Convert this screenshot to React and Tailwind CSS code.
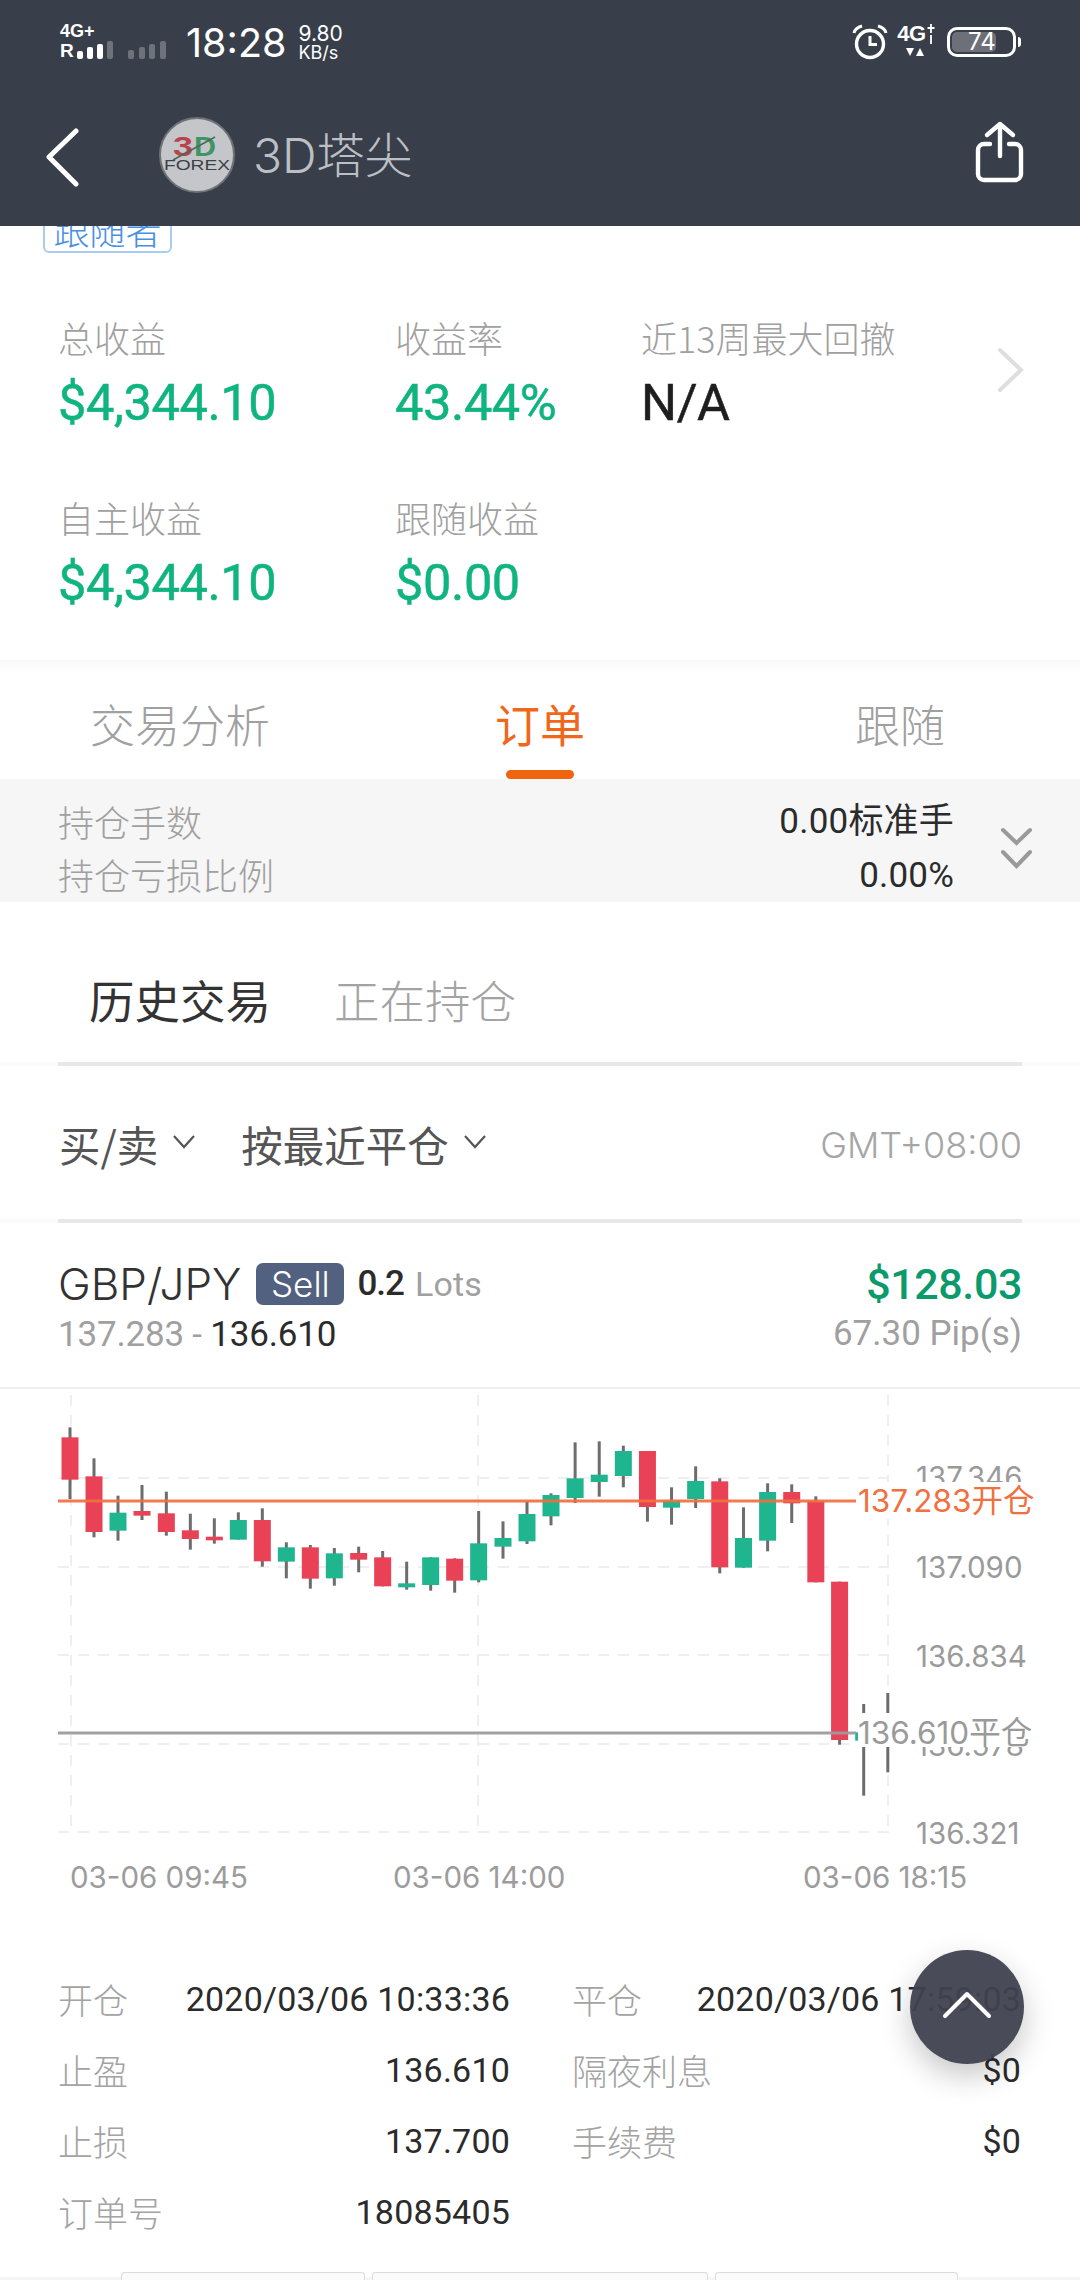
import React from 'react';

const cjk = '"Noto Sans CJK SC", "Noto Sans", sans-serif';
const num = 'Roboto, "Noto Sans CJK SC", sans-serif';

const C = (X, wt, wb, bt, bb, up) => ({ x: 40 + X / 3, wt: 1380 + wt / 3, wb: 1380 + wb / 3, bt: 1380 + bt / 3, bb: 1380 + bb / 3, up });
const D = (X, wt, wb, bt, bb, up) => ({ x: 540 + X / 2.904, wt: 1380 + wt / 3, wb: 1380 + wb / 3, bt: 1380 + bt / 3, bb: 1380 + bb / 3, up });

const candles = [
  C(90, 145, 360, 175, 302, 0), C(162, 238, 475, 292, 459, 0), C(234, 350, 485, 401, 455, 1),
  C(306, 318, 423, 396, 410, 0), C(379, 338, 470, 403, 459, 0), C(451, 404, 512, 454, 480, 0),
  C(523, 418, 494, 473, 484, 0), C(595, 400, 482, 423, 482, 1), C(667, 388, 563, 423, 547, 0),
  C(739, 490, 598, 505, 548, 1), C(811, 498, 629, 505, 599, 0), C(883, 507, 620, 523, 598, 1),
  C(956, 503, 580, 522, 542, 0), C(1028, 516, 622, 535, 622, 0), C(1100, 548, 632, 613, 625, 1),
  C(1172, 535, 635, 535, 618, 1), C(1244, 538, 641, 539, 605, 0), C(1316, 396, 610, 493, 604, 1),
  C(1389, 427, 539, 477, 503, 1), C(1461, 368, 495, 405, 487, 1), C(1533, 343, 439, 348, 412, 1),
  D(102, 190, 372, 298, 357, 1), D(172, 187, 353, 287, 309, 1), D(242, 200, 325, 216, 291, 1),
  D(312, 216, 428, 216, 384, 0), D(382, 325, 437, 365, 386, 1), D(452, 262, 387, 306, 360, 1),
  D(522, 298, 583, 307, 565, 0), D(591, 385, 566, 477, 566, 1), D(661, 313, 517, 339, 485, 1),
  D(731, 316, 432, 339, 373, 0), D(801, 352, 610, 367, 610, 0), D(870, 608, 1097, 608, 1083, 0),
  D(940, 975, 1250, 1060, 1085, 1), D(1010, 942, 1180, 1060, 1080, 1),
];

function Chart() {
  const hs = [1479, 1568, 1656, 1745, 1833];
  const vs = [71, 478, 888];
  return (
    <svg className="block" width="1080" height="460" viewBox="0 1390 1080 460">
      {hs.map((y) => (
        <line key={y} x1="58" x2="898" y1={y} y2={y} stroke="#efefef" strokeWidth="2" strokeDasharray="11 9" />
      ))}
      {vs.map((x) => (
        <line key={x} x1={x} x2={x} y1="1396" y2="1833" stroke="#efefef" strokeWidth="2" strokeDasharray="11 9" />
      ))}
      {candles.map((c, i) => (
        <g key={i}>
          <rect x={c.x - 1.5} y={c.wt} width="3" height={c.wb - c.wt} fill="#6d6d6d" />
          <rect x={c.x - 8.5} y={c.bt} width="17" height={c.bb - c.bt} fill={c.up ? '#1fb58f' : '#e94257'} />
        </g>
      ))}
      <rect x="58" y="1500.5" width="798" height="3" fill="#f0703f" fillOpacity="0.92" />
      <rect x="58" y="1732.5" width="798" height="3" fill="#9c9c9c" fillOpacity="0.95" />
    </svg>
  );
}

function Row({ a, b, c, d }) {
  return (
    <div className="flex h-[71px] items-center pl-[58px] pr-[59px]">
      <div className="flex w-[452px] items-center justify-between">
        <span className="text-[35px] text-[#a3a3a3] font-light" style={{ fontFamily: cjk }}>{a}</span>
        <span className="text-[34px] text-[#2b2b2b] tracking-[0.2px]" style={{ fontFamily: num }}>{b}</span>
      </div>
      {c ? (
        <div className="ml-[62px] flex w-[449px] items-center justify-between">
          <span className="text-[35px] text-[#a3a3a3] font-light" style={{ fontFamily: cjk }}>{c}</span>
          <span className="text-[34px] text-[#2b2b2b] tracking-[0.2px]" style={{ fontFamily: num }}>{d}</span>
        </div>
      ) : null}
    </div>
  );
}

function Stat({ label, value, dark }) {
  return (
    <div className="flex flex-col">
      <span className="h-[50px] text-[36px] leading-[50px] font-light text-[#a0a0a0] whitespace-nowrap" style={{ fontFamily: cjk }}>{label}</span>
      <span
        className={`mt-[16px] h-[50px] text-[50.5px] leading-[50px] font-normal tracking-[-0.4px] whitespace-nowrap ${dark ? 'text-[#1e1e1e]' : 'text-[#0fb47f]'}`}
        style={{ fontFamily: num, WebkitTextStroke: '0.5px currentColor' }}
      >
        {value}
      </span>
    </div>
  );
}

function Caret() {
  return (
    <svg width="24" height="16" viewBox="0 0 24 16" fill="none" stroke="#555" strokeWidth="2.2">
      <path d="M2 2l10 11L22 2" />
    </svg>
  );
}

export default function App() {
  return (
    <div className="relative h-[2280px] w-[1080px] overflow-hidden bg-white" style={{ fontFamily: cjk }}>
      {/* header */}
      <header className="h-[226px] bg-[#383f4a]">
        <div className="flex h-[84px] items-start justify-between pl-[60px] pr-[64px] pt-[21px]">
          <div className="flex items-start">
            <div className="flex w-[117px] flex-col text-white" style={{ fontFamily: '"Liberation Sans", sans-serif' }}>
              <span className="h-[20px] text-[18px] leading-[20px] font-bold">4G+</span>
              <div className="flex h-[20px] items-center">
                <span className="text-[19px] leading-[20px] font-bold">R</span>
                <svg width="102" height="20" viewBox="0 0 102 20" className="ml-[1px]">
                  <rect x="2" y="10" width="6" height="8" rx="2" fill="#fff" />
                  <rect x="12" y="6" width="6" height="12" rx="2" fill="#fff" />
                  <rect x="22" y="3" width="6" height="15" rx="2" fill="#fff" />
                  <rect x="32" y="0" width="6" height="18" rx="2" fill="#6d727b" />
                  <rect x="53" y="9" width="6" height="9" rx="2" fill="#6d727b" />
                  <rect x="64" y="6" width="6" height="12" rx="2" fill="#6d727b" />
                  <rect x="74" y="3" width="6" height="15" rx="2" fill="#6d727b" />
                  <rect x="85" y="0" width="6" height="18" rx="2" fill="#6d727b" />
                </svg>
              </div>
            </div>
            <span className="ml-[9px] text-[39.5px] leading-[44px] text-white" style={{ fontFamily: 'Inter, sans-serif' }}>18:28</span>
            <div className="ml-[12px] flex flex-col text-white" style={{ fontFamily: 'Inter, sans-serif' }}>
              <span className="text-[21px] leading-[21px] mt-[2px]">9.80</span>
              <span className="text-[18px] leading-[18px]">KB/s</span>
            </div>
          </div>
          <div className="flex items-start">
            <svg width="36" height="36" viewBox="0 0 36 36" fill="none" stroke="#fff" className="mt-[3px]">
              <circle cx="18" cy="20" r="13.5" strokeWidth="3.4" />
              <path d="M18 12v8.5h7" strokeWidth="3" />
              <path d="M2 9c1-4 4-6 8-7M34 9c-1-4-4-6-8-7" strokeWidth="3" />
            </svg>
            <div className="ml-[9px] flex w-[38px] flex-col items-center text-white" style={{ fontFamily: '"Liberation Sans", sans-serif' }}>
              <div className="flex h-[26px] items-center">
                <span className="text-[22px] leading-[26px] font-bold whitespace-nowrap tracking-[-0.5px]">4G</span>
                <svg width="8" height="20" viewBox="0 0 8 20" fill="none" stroke="#fff" strokeWidth="1.8" className="ml-[1px]">
                  <path d="M4 0v9M0.5 4h7M4 11v9" />
                </svg>
              </div>
              <svg width="20" height="8" viewBox="0 0 20 8" fill="#fff" className="mt-[1px]">
                <path d="M0 0h8L4 8zM10 8h8L14 0z" />
              </svg>
            </div>
            <div className="relative ml-[12px] mt-[6px] flex h-[30px] w-[69px] items-center rounded-[10px] border-[3px] border-white p-[2px]">
              <div className="h-full w-[44px] rounded-[5px] bg-[#6d6f79]" />
              <span className="absolute left-[18px] top-[-3px] text-[24px] leading-[30px] text-white" style={{ fontFamily: 'Inter, sans-serif' }}>74</span>
              <div className="absolute right-[-8px] top-[7px] h-[10px] w-[3px] rounded-r bg-white" />
            </div>
          </div>
        </div>
        <div className="flex h-[142px] items-start pl-[45px] pr-[55px]">
          <svg width="36" height="60" viewBox="0 0 36 60" fill="none" stroke="#fff" strokeWidth="5" strokeLinecap="round" strokeLinejoin="round" className="mt-[44px]">
            <path d="M31 3L4 29l27 27" />
          </svg>
          <svg width="76" height="76" viewBox="0 0 76 76" className="ml-[78px] mt-[33px]">
            <circle cx="38" cy="38" r="37" fill="#c5c6ca" stroke="#6f7278" strokeWidth="2" />
            <text x="14" y="39" fontSize="27" fontWeight="700" fill="#b8434e" fontFamily="Liberation Sans" textLength="20" lengthAdjust="spacingAndGlyphs">3</text>
            <text x="35" y="39" fontSize="27" fontWeight="700" fill="#3f9468" fontFamily="Liberation Sans" textLength="22" lengthAdjust="spacingAndGlyphs">D</text>
            <path d="M14 43L56 20" stroke="#4d6a55" strokeWidth="1.6" />
            <text x="38" y="53" textAnchor="middle" fontSize="15" fill="#3d4047" fontFamily="Liberation Sans" textLength="66" lengthAdjust="spacingAndGlyphs">FOREX</text>
          </svg>
          <span className="ml-[18px] mt-[42px] text-[48px] leading-[60px] font-light text-[#bcbfc4] whitespace-nowrap" style={{ fontFamily: 'Inter, "Noto Sans CJK SC", sans-serif' }}>3D塔尖</span>
          <svg width="50" height="62" viewBox="0 0 50 62" fill="none" stroke="#fff" strokeWidth="4.4" strokeLinecap="round" strokeLinejoin="round" className="ml-auto mt-[37px]">
            <path d="M15 23H9a6 6 0 0 0-6 6v24a6 6 0 0 0 6 6h31a6 6 0 0 0 6-6V29a6 6 0 0 0-6-6h-6" />
            <path d="M25 35V3M12 14L25 3l13 11" />
          </svg>
        </div>
      </header>

      {/* badge + stats */}
      <section className="h-[434px] pl-[58px]">
        <div className="-ml-[15px] h-[28px] overflow-hidden">
          <div className="-mt-[20px] flex h-[47px] w-[129px] items-center justify-center rounded-[6px] border-2 border-[#a9cdf0] text-[36px] leading-[47px] font-light text-[#4a90e2]">跟随者</div>
        </div>
        <div className="mt-[58px] flex items-center pr-[55px]">
          <div className="w-[337px]"><Stat label="总收益" value="$4,344.10" /></div>
          <div className="w-[246px]"><Stat label="收益率" value="43.44%" /></div>
          <div className="flex-1"><Stat label="近13周最大回撤" value="N/A" dark /></div>
          <svg width="28" height="46" viewBox="0 0 28 46" fill="none" stroke="#dedede" strokeWidth="4" strokeLinecap="round">
            <path d="M3 3l21 20L3 43" />
          </svg>
        </div>
        <div className="mt-[64px] flex">
          <div className="w-[337px]"><Stat label="自主收益" value="$4,344.10" /></div>
          <div className="w-[246px]"><Stat label="跟随收益" value="$0.00" /></div>
        </div>
      </section>
      <div className="h-[12px] bg-gradient-to-b from-[#f8f8f8] to-white" />

      {/* main tabs */}
      <nav className="grid h-[107px] grid-cols-3 text-[45px] font-light text-[#a0a0a0]">
        <div className="flex flex-col items-center pt-[22px]"><span className="leading-[60px]">交易分析</span></div>
        <div className="flex flex-col items-center pt-[22px] text-[#f0671a]">
          <span className="leading-[60px] font-normal">订单</span>
          <span className="mt-[16px] h-[9px] w-[68px] rounded-full bg-[#f0640f]" />
        </div>
        <div className="flex flex-col items-center pt-[22px]"><span className="leading-[60px]">跟随</span></div>
      </nav>

      {/* position summary */}
      <section className="flex h-[123px] items-center bg-[#f6f6f6] pl-[58px] pr-[47px] pt-[14px]">
        <div className="flex flex-1 flex-col text-[36px] leading-[52px]">
          <div className="flex justify-between">
            <span className="font-light text-[#a0a0a0]">持仓手数</span>
            <span className="text-[35px] text-[#2b2b2b] tracking-[0.2px] mt-[1px]" style={{ fontFamily: num }}>0.00标准手</span>
          </div>
          <div className="flex justify-between">
            <span className="font-light text-[#a0a0a0]">持仓亏损比例</span>
            <span className="text-[35px] text-[#2b2b2b] tracking-[0.2px] mt-[2px] -mb-[2px]" style={{ fontFamily: num }}>0.00%</span>
          </div>
        </div>
        <svg width="33" height="42" viewBox="0 0 33 42" fill="none" stroke="#9a9a9a" strokeWidth="4" strokeLinecap="round" className="ml-[46px]">
          <path d="M3 3l13.5 13L30 3M3 25l13.5 14L30 25" />
        </svg>
      </section>

      {/* sub tabs */}
      <div className="flex h-[160px] items-center pl-[89px] pt-[34px] text-[45.5px]">
        <span className="font-normal text-[#333]">历史交易</span>
        <span className="ml-[63px] font-light text-[#a3a3a3]">正在持仓</span>
      </div>
      <div className="flex h-[4px] bg-[#fafafa]"><div className="ml-[58px] w-[964px] bg-[#e8e8e8]" /></div>

      {/* filter row */}
      <div className="flex h-[153px] items-center pl-[59px] pr-[58px] pt-[4px]">
        <span className="text-[41.5px] text-[#555]">买/卖</span>
        <span className="ml-[14px] mb-[6px]"><Caret /></span>
        <span className="ml-[45px] text-[41.5px] text-[#555]">按最近平仓</span>
        <span className="ml-[14px] mb-[6px]"><Caret /></span>
        <span className="ml-auto text-[36px] font-light text-[#a6a6a6]" style={{ fontFamily: 'Inter, sans-serif' }}>GMT+08:00</span>
      </div>
      <div className="flex h-[4px] bg-[#fafafa]"><div className="ml-[58px] w-[964px] bg-[#e8e8e8]" /></div>

      {/* order title */}
      <div className="flex h-[166px] justify-between pl-[58px] pr-[58px] pt-[38px] border-b-2 border-[#f0f0f0]">
        <div className="flex flex-col">
          <div className="flex h-[46px] items-center">
            <span className="text-[44px] font-light text-[#333]" style={{ fontFamily: 'Inter, sans-serif' }}>GBP/JPY</span>
            <span className="ml-[15px] flex h-[42px] w-[88px] items-center justify-center rounded-[7px] bg-[#51617f] text-[35px] font-light text-white" style={{ fontFamily: 'Inter, sans-serif' }}>Sell</span>
            <span className="ml-[13px] text-[35px] font-medium tracking-[-1px] text-[#2b2b2b]" style={{ fontFamily: num }}>0.2</span>
            <span className="ml-[11px] text-[34px] tracking-[0.2px] text-[#a0a0a0]" style={{ fontFamily: num }}>Lots</span>
          </div>
          <div className="mt-[6px] text-[35px] leading-[44px] tracking-[-0.2px]" style={{ fontFamily: num }}>
            <span className="text-[#a0a0a0]">137.283 - </span><span className="text-[#2b2b2b]">136.610</span>
          </div>
        </div>
        <div className="flex flex-col items-end">
          <span className="h-[46px] text-[43px] leading-[46px] font-medium tracking-[-0.4px] text-[#0a9a6b]" style={{ fontFamily: num }}>$128.03</span>
          <span className="mt-[5px] text-[35px] leading-[44px] text-[#a0a0a0]" style={{ fontFamily: num }}>67.30 Pip(s)</span>
        </div>
      </div>

      {/* chart */}
      <div className="relative h-[460px]">
        <Chart />
        <span className="absolute left-[916px] top-[70px] h-[36px] text-[29.5px] leading-[36px] text-[#9a9a9a]" style={{ fontFamily: 'Inter, sans-serif' }}>137.346</span>
        <span className="absolute left-[916px] top-[160px] text-[29.5px] leading-[36px] text-[#9a9a9a]" style={{ fontFamily: 'Inter, sans-serif' }}>137.090</span>
        <span className="absolute left-[916px] top-[249px] text-[29.5px] leading-[36px] text-[#9a9a9a]" style={{ fontFamily: 'Inter, sans-serif' }}>136.834</span>
        <span className="absolute left-[916px] top-[338px] text-[29.5px] leading-[36px] text-[#9a9a9a]" style={{ fontFamily: 'Inter, sans-serif' }}>136.578</span>
        <span className="absolute left-[916px] top-[426px] text-[29.5px] leading-[36px] text-[#9a9a9a]" style={{ fontFamily: 'Inter, sans-serif' }}>136.321</span>
        <div className="absolute left-[858px] top-[93px] h-[37px] w-[180px] bg-white text-[31.5px] leading-[38px] text-[#f0703f] whitespace-nowrap" style={{ fontFamily: 'Inter, "Noto Sans CJK SC", sans-serif' }}>137.283开仓</div>
        <div className="absolute left-[858px] top-[324px] h-[34px] w-[180px] bg-white text-[31.5px] leading-[40px] text-[#9a9a9a] whitespace-nowrap" style={{ fontFamily: 'Inter, "Noto Sans CJK SC", sans-serif' }}>136.610平仓</div>
      </div>
      <div className="flex h-[54px] items-center pl-[70px] pt-[2px] text-[29.5px] text-[#9c9c9c]" style={{ fontFamily: 'Inter, sans-serif' }}>
        <span className="w-[323px] whitespace-nowrap">03-06 09:45</span>
        <span className="w-[410px] whitespace-nowrap">03-06 14:00</span>
        <span className="whitespace-nowrap">03-06 18:15</span>
      </div>

      {/* details */}
      <div className="mt-[61px]">
        <Row a="开仓" b="2020/03/06 10:33:36" c="平仓" d="2020/03/06 17:59:03" />
        <Row a="止盈" b="136.610" c="隔夜利息" d="$0" />
        <Row a="止损" b="137.700" c="手续费" d="$0" />
        <Row a="订单号" b="18085405" />
      </div>

      {/* bottom strip */}
      <div className="absolute bottom-0 left-0 h-[3px] w-full bg-[#f5f5f5]" />
      <div className="absolute bottom-0 left-[121px] flex h-[8px] gap-[7px]">
        <div className="w-[244px] rounded-t-[4px] border border-b-0 border-[#dcdcdc] bg-[#fbfbfb]" />
        <div className="w-[336px] rounded-t-[4px] border border-b-0 border-[#dcdcdc] bg-[#fbfbfb]" />
        <div className="w-[243px] rounded-t-[4px] border border-b-0 border-[#dcdcdc] bg-[#fbfbfb]" />
      </div>

      {/* scroll to top */}
      <button className="absolute left-[910px] top-[1950px] flex h-[114px] w-[114px] items-center justify-center rounded-full bg-[#40414f]/95 shadow-[0_12px_30px_rgba(0,0,0,0.22)]">
        <svg width="50" height="30" viewBox="0 0 50 30" fill="none" stroke="#fff" strokeWidth="4" strokeLinecap="round" strokeLinejoin="round" className="mt-[-4px]">
          <path d="M3 26L25 4l22 22" />
        </svg>
      </button>
    </div>
  );
}
